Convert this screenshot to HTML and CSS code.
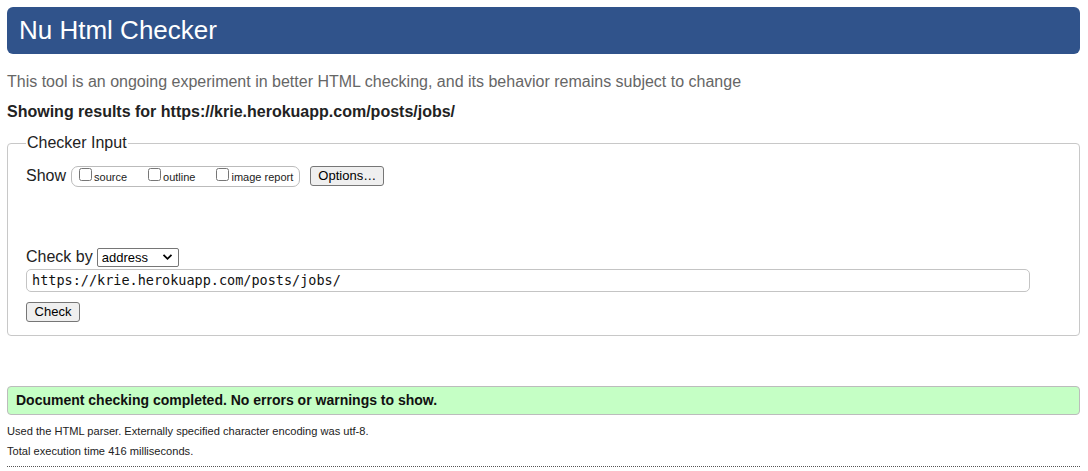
FILE: index.html
```html
<!DOCTYPE html>
<html>
<head>
<meta charset="utf-8">
<title>Nu Html Checker</title>
<link rel="stylesheet" href="styles.css">
</head>
<body>
<h1 class="title">Nu Html Checker</h1>
<p class="intro">This tool is an ongoing experiment in better HTML checking, and its behavior remains subject to change</p>
<p class="showing">Showing results for https://krie.herokuapp.com/posts/jobs/</p>
<fieldset class="input-box">
  <legend class="legend">Checker Input</legend>
  <div class="show-row">
    <span class="show-label">Show</span>
    <div class="show-group">
      <label class="opt opt-source"><input type="checkbox" class="cb">source</label>
      <label class="opt opt-outline"><input type="checkbox" class="cb">outline</label>
      <label class="opt"><input type="checkbox" class="cb">image report</label>
    </div>
    <button class="btn btn-options">Options…</button>
  </div>
  <div class="checkby-row">
    <span class="checkby-label">Check by</span>
    <div class="select">
      <span>address</span>
      <svg class="chev" width="11" height="8" viewBox="0 0 11 8"><path d="M1.5 1.8 L5.5 5.8 L9.5 1.8" fill="none" stroke="#000" stroke-width="1.8"/></svg>
    </div>
  </div>
  <div class="url-field">https://krie.herokuapp.com/posts/jobs/</div>
  <button class="btn btn-check">Check</button>
</fieldset>
<div class="success">Document checking completed. No errors or warnings to show.</div>
<p class="details details-first">Used the HTML parser. Externally specified character encoding was utf-8.</p>
<p class="details">Total execution time 416 milliseconds.</p>
<div class="dotted"></div>
</body>
</html>
```
FILE: styles.css
```css
html, body {
  margin: 0;
  padding: 0;
  background: #fff;
}
body {
  padding: 7px 8px 0 7px;
  font-family: "Liberation Sans", Arial, sans-serif;
  color: #000;
}
.title {
  margin: 0;
  height: 47px;
  line-height: 47px;
  padding: 0 12px;
  background: #30538b;
  color: #fff;
  font-size: 26px;
  font-weight: normal;
  border-radius: 6px;
}
.intro {
  margin: 18px 0 0;
  font-size: 16px;
  line-height: 20px;
  color: #666;
}
.showing {
  margin: 10px 0 0;
  font-size: 16px;
  line-height: 20px;
  font-weight: bold;
  color: #222;
}
.input-box {
  margin: 11px 0 0;
  padding: 2px 18px 13px 18px;
  border: 1px solid #c8c8c8;
  border-radius: 4px;
  min-width: 0;
}
.legend {
  padding: 0 1px;
  font-size: 16px;
  line-height: 20px;
  color: #222;
}
.show-row {
  display: flex;
  align-items: center;
  height: 22px;
  margin-top: 10px;
}
.show-label {
  font-size: 16px;
  color: #222;
  margin-right: 5px;
}
.show-group {
  display: flex;
  align-items: center;
  height: 19px;
  border: 1px solid #bbb;
  border-radius: 7px;
  padding: 0 6px 0 6px;
}
.opt {
  display: flex;
  align-items: center;
  font-size: 11px;
  color: #222;
  margin-top: 1px;
}
.opt-source { margin-right: 20px; }
.opt-outline { margin-right: 20px; }
.cb {
  margin: 0 2px 0 1px;
  width: 13px;
  height: 13px;
  position: relative;
  top: -2px;
}
.btn {
  font-family: "Liberation Sans", Arial, sans-serif;
  font-size: 13px;
  color: #000;
  background: #efefef;
  border: 1px solid #767676;
  border-radius: 3px;
  padding: 0 6px;
  height: 20px;
  line-height: 18px;
}
.btn-options {
  margin-left: 10px;
  width: 74px;
}
.checkby-row {
  display: flex;
  align-items: center;
  margin-top: 60px;
  height: 20px;
}
.checkby-label {
  font-size: 16px;
  color: #222;
  margin-right: 4px;
}
.select {
  display: flex;
  align-items: center;
  justify-content: space-between;
  box-sizing: border-box;
  width: 82px;
  height: 19px;
  border: 1px solid #767676;
  border-radius: 2px;
  padding: 0 5px 0 4px;
  font-size: 13px;
  color: #000;
}
.url-field {
  box-sizing: border-box;
  width: 1004px;
  height: 23px;
  margin-top: 2px;
  border: 1px solid #c4c4c4;
  border-radius: 5px;
  padding: 0 5px;
  font-family: "DejaVu Sans Mono", "Liberation Mono", monospace;
  font-size: 13.5px;
  line-height: 21px;
  color: #111;
}
.btn-check {
  display: block;
  margin-top: 10px;
  width: 54px;
  padding: 0;
}
.success {
  margin-top: 50px;
  height: 29px;
  box-sizing: border-box;
  border: 1px solid #bcbcbc;
  border-radius: 4px;
  background: #c5ffc5;
  padding: 0 8px;
  font-size: 14px;
  font-weight: bold;
  line-height: 27px;
  color: #111;
}
.details {
  margin: 0;
  font-size: 11.1px;
  line-height: 20px;
  color: #222;
}
.details-first { margin-top: 6px; }
.dotted {
  margin-top: 5px;
  border-top: 1px dotted #555;
}
```
